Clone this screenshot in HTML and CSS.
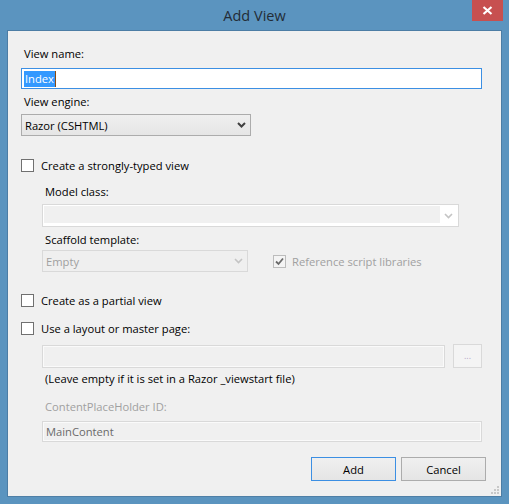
FILE: index.html
```html
<!DOCTYPE html>
<html>
<head>
<meta charset="utf-8">
<title>Add View</title>
<link rel="stylesheet" href="styles.css">
</head>
<body>
<div class="window">
  <div class="titlebar">
    <span class="title">Add View</span>
    <div class="close-btn">
      <svg width="11" height="9" viewBox="0 0 11 9"><path d="M1.5 1 L9.5 8 M9.5 1 L1.5 8" stroke="#fff" stroke-width="2.2" fill="none"/></svg>
    </div>
  </div>
  <div class="client">
    <div class="label first">View name:</div>
    <div class="textbox focused"><span class="sel">Index</span><span class="caret"></span></div>

    <div class="label gap6">View engine:</div>
    <div class="combo engine">
      <span class="combo-text">Razor (CSHTML)</span>
      <svg class="chev" width="9" height="6" viewBox="0 0 9 6"><path d="M1 1 L4.5 4.5 L8 1" stroke="#404040" stroke-width="2" fill="none"/></svg>
    </div>

    <div class="check-row cr-strong"><span class="box"></span><span>Create a strongly-typed view</span></div>

    <div class="indent">
      <div class="label model-label">Model class:</div>
      <div class="combo-edit">
        <div class="edit-area"></div>
        <div class="edit-arrow"><svg width="9" height="6" viewBox="0 0 9 6"><path d="M1 1 L4.5 4.5 L8 1" stroke="#c4c4c4" stroke-width="1.6" fill="none"/></svg></div>
      </div>
      <div class="label scaffold-label">Scaffold template:</div>
      <div class="scaffold-row">
        <div class="combo disabled scaffold">
          <span class="combo-text">Empty</span>
          <svg class="chev" width="9" height="6" viewBox="0 0 9 6"><path d="M1 1 L4.5 4.5 L8 1" stroke="#c4c4c4" stroke-width="1.6" fill="none"/></svg>
        </div>
        <div class="check-row ref-row disabled-text"><span class="box checked"><svg width="11" height="11" viewBox="0 0 11 11"><path d="M2 5.5 L4.5 8 L9 2.5" stroke="#6a6a6a" stroke-width="1.8" fill="none"/></svg></span><span>Reference script libraries</span></div>
      </div>
    </div>

    <div class="check-row cr-partial"><span class="box"></span><span>Create as a partial view</span></div>
    <div class="check-row cr-layout"><span class="box"></span><span>Use a layout or master page:</span></div>

    <div class="indent">
      <div class="layout-row">
        <div class="textbox disabled layout-box"></div>
        <div class="dots-btn">...</div>
      </div>
      <div class="label leave">(Leave empty if it is set in a Razor _viewstart file)</div>
      <div class="label cph disabled-text">ContentPlaceHolder ID:</div>
      <div class="textbox disabled main-content">MainContent</div>
    </div>

    <div class="buttons">
      <div class="btn default">Add</div>
      <div class="btn">Cancel</div>
    </div>

    <svg class="grip" width="10" height="10" viewBox="0 0 10 10">
      <rect x="7" y="1" width="2" height="2" fill="#c8c8c8"/>
      <rect x="4" y="4" width="2" height="2" fill="#c8c8c8"/>
      <rect x="7" y="4" width="2" height="2" fill="#c8c8c8"/>
      <rect x="1" y="7" width="2" height="2" fill="#c8c8c8"/>
      <rect x="4" y="7" width="2" height="2" fill="#c8c8c8"/>
      <rect x="7" y="7" width="2" height="2" fill="#c8c8c8"/>
    </svg>
  </div>
</div>
</body>
</html>
```

FILE: styles.css
```css
* { box-sizing: border-box; }
html, body { margin: 0; padding: 0; }
body {
  font-family: "Open Sans", "Noto Sans", "DejaVu Sans", sans-serif;
  font-size: 11.2px;
  color: #000;
  background: #5b94bf;
}
.window {
  width: 509px;
  height: 504px;
  background: #5b94bf;
  display: flex;
  flex-direction: column;
}
.titlebar {
  height: 30px;
  position: relative;
  display: flex;
  align-items: center;
  justify-content: center;
}
.title {
  font-size: 14.5px;
  color: #232c36;
  padding-top: 1px;
}
.close-btn {
  position: absolute;
  right: 6px;
  top: 0;
  width: 31px;
  height: 21px;
  background: #c75050;
  display: flex;
  align-items: center;
  justify-content: center;
}
.client {
  position: relative;
  flex: 1;
  margin: 0 7px 7px 7px;
  background: #f0f0f0;
  border: 1px solid #4c7da5;
  border-bottom-color: #4f7fa6;
  padding: 14px 19px 0 13px;
}
.label {
  height: 16px;
  line-height: 16px;
  padding-left: 3px;
  white-space: nowrap;
}
.first { margin-top: 1px; }
.gap6 { margin-top: 5px; }
.textbox {
  height: 21px;
  margin-top: 6px;
  border: 1px solid #abadb3;
  background: #fff;
  display: flex;
  align-items: center;
  padding-left: 2px;
  line-height: 16px;
}
.textbox.focused { border-color: #3c8fe3; }
.sel {
  background: #3399ff;
  color: #fff;
  height: 16px;
  padding: 0 1px;
}
.caret {
  width: 1px;
  height: 16px;
  background: #8a4a10;
}
.combo {
  height: 22px;
  border: 1px solid #acacac;
  background: linear-gradient(#efefef, #e5e5e5);
  display: flex;
  align-items: center;
  justify-content: space-between;
  padding: 0 4px 0 3px;
}
.engine { width: 230px; margin-top: 4px; }
.chev { display: block; }
.check-row {
  display: flex;
  align-items: center;
  height: 16px;
  gap: 7px;
  white-space: nowrap;
}
.box {
  width: 13px;
  height: 13px;
  border: 1px solid #707070;
  background: #fff;
  display: flex;
  align-items: center;
  justify-content: center;
  flex: none;
}
.box.checked { border-color: #bcbcbc; background: #f4f4f4; }
.cr-strong { margin-top: 21px; }
.indent { padding-left: 21px; }
.model-label { margin-top: 11px; }
.combo-edit {
  margin-top: 4px;
  height: 23px;
  width: 417px;
  border: 1px solid #d9d9d9;
  background: #fff;
  display: flex;
  padding: 1px;
}
.edit-area { flex: 1; background: #f0f0f0; margin-bottom: 2px; }
.edit-arrow {
  width: 17px;
  display: flex;
  align-items: center;
  justify-content: center;
  background: #fff;
}
.scaffold-label { margin-top: 5px; }
.scaffold-row {
  margin-top: 2px;
  display: flex;
  align-items: center;
  gap: 25px;
}
.combo.disabled {
  border-color: #d9d9d9;
  background: #efefef;
  color: #a0a0a0;
}
.scaffold { width: 206px; }
.disabled-text { color: #a0a0a0; }
.ref-row { gap: 6px; }
.cr-partial { margin-top: 20px; }
.cr-layout { margin-top: 12px; }
.layout-row {
  margin-top: 8px;
  display: flex;
  align-items: center;
  gap: 8px;
  height: 24px;
}
.textbox.disabled {
  border: 1px solid #d9d9d9;
  background: #f0f0f0;
  box-shadow: inset 0 0 0 1px #fafafa;
}
.layout-box { margin-top: 0; width: 403px; height: 23px; }
.dots-btn {
  width: 29px;
  height: 24px;
  border: 1px solid #d9d9d9;
  background: #f4f4f4;
  color: #b4a8c8;
  font-size: 9px;
  display: flex;
  align-items: center;
  justify-content: center;
  padding-bottom: 2px;
}
.leave { margin-top: 3px; }
.cph { margin-top: 12px; }
.main-content {
  width: 440px;
  margin-top: 6px;
  color: #6a6a6a;
  padding-left: 3px;
}
.buttons {
  margin-top: 15px;
  display: flex;
  justify-content: flex-end;
  gap: 5px;
  margin-right: -4px;
}
.btn {
  width: 85px;
  height: 24px;
  border: 1px solid #acacac;
  background: linear-gradient(#f0f0f0, #e5e5e5);
  display: flex;
  align-items: center;
  justify-content: center;
}
.btn.default { border-color: #3c8fe3; }
.grip {
  position: absolute;
  right: 1px;
  bottom: 1px;
}
```
